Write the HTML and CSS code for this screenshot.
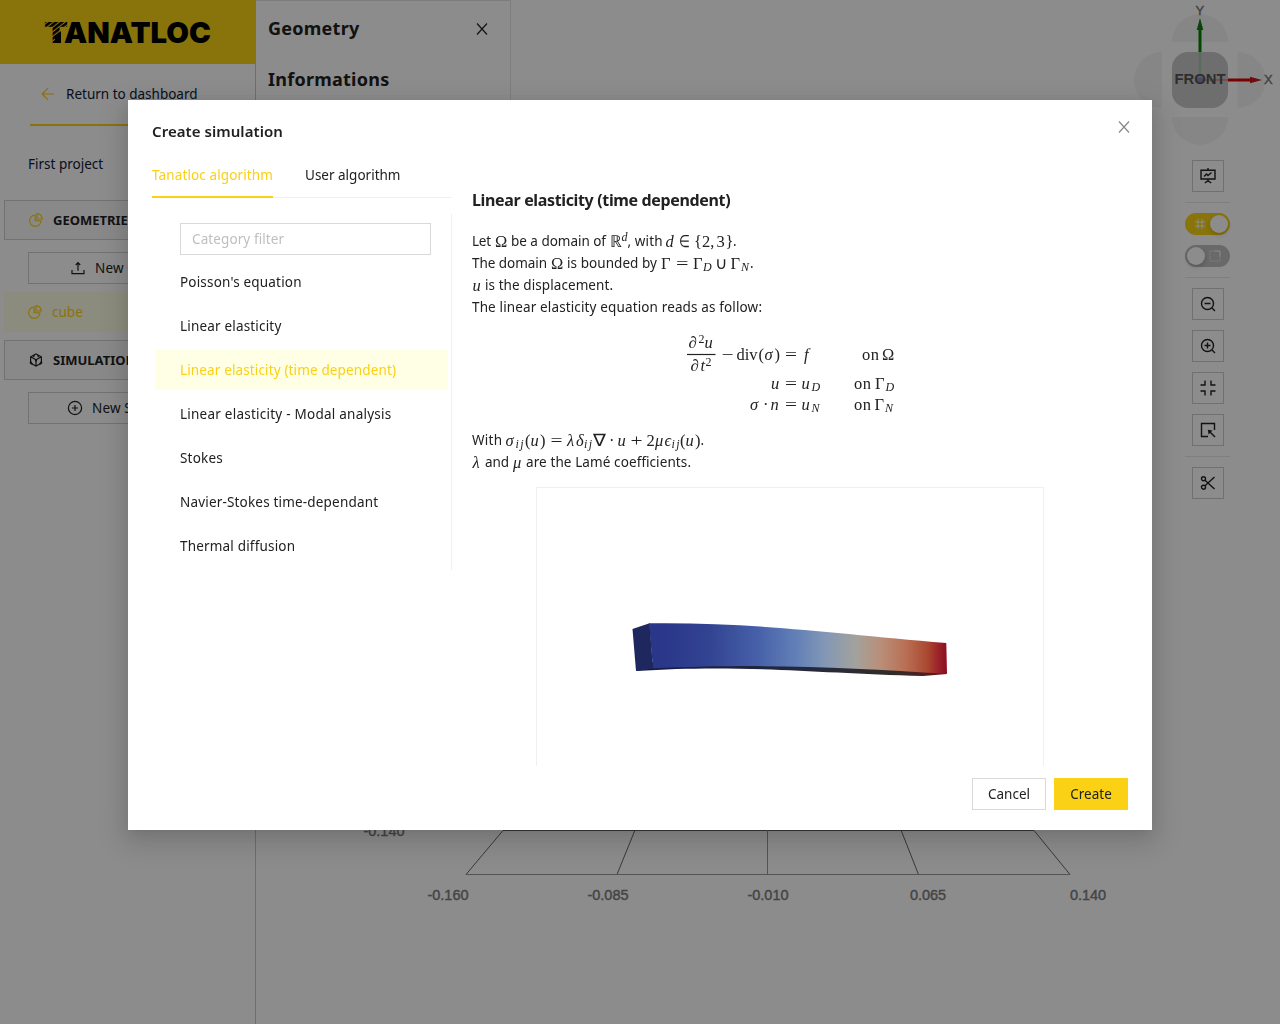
FILE: index.html
```html
<!DOCTYPE html>
<html lang="en">
<head>
<meta charset="utf-8">
<title>Tanatloc</title>
<link rel="stylesheet" href="styles.css">
</head>
<body>
<div class="app">
  <aside class="sidebar">
    <div class="brand">
      <svg width="176" height="44" viewBox="-4 -11 176 44">
        <defs><pattern id="stripes" width="3.6" height="3.6" patternUnits="userSpaceOnUse" patternTransform="rotate(-38)"><rect width="3.6" height="2.5" fill="#000"/></pattern></defs>
        <text class="logo" x="0" y="22" textLength="24" lengthAdjust="spacingAndGlyphs">T</text>
        <path d="M17 10 L17 22 H11 V16Z"/>
        <text class="logo" x="20" y="22" textLength="147" lengthAdjust="spacingAndGlyphs">ANATLOC</text>
      </svg>
    </div>
    <div class="return">
      <svg class="gold" width="14" height="14" viewBox="0 0 14 14"><path d="M13 7H1.5M7 1.2 1.2 7 7 12.8"/></svg>
      <span>Return to dashboard</span>
    </div>
    <div class="project">First project</div>
    <div class="group">
      <svg class="gold" width="14" height="14" viewBox="0 0 14 14"><path d="M6 2A5.7 5.7 0 1 0 12 8L6.3 7.7ZM8 .7V6H13.3A5.4 5.4 0 0 0 8 .7Z"/></svg>
      <b>GEOMETRIES</b>
    </div>
    <div class="add"><svg width="14" height="14" viewBox="0 0 14 14"><path d="M1 9V12.6H13V9M7 9.8V2M4.8 4 7 1.6 9.2 4"/></svg><span>New Geometry</span></div>
    <div class="item"><svg class="gold" width="14" height="14" viewBox="0 0 14 14"><path d="M6 2A5.7 5.7 0 1 0 12 8L6.3 7.7ZM8 .7V6H13.3A5.4 5.4 0 0 0 8 .7Z"/></svg><span>cube</span></div>
    <div class="group">
      <svg width="14" height="14" viewBox="0 0 14 14"><path d="M7 1 12.4 3.8V10.2L7 13 1.6 10.2V3.8ZM1.6 3.8 7 6.8 12.4 3.8M7 6.8V13"/><path stroke-width="2" d="M4 2.6 5.500 3.400M10 2.600 8.500 3.400M1.800 8.500V10L3.500 11M12.200 8.500V10L10.500 11M7 6.500V8.500"/></svg>
      <b>SIMULATIONS</b>
    </div>
    <div class="add sim"><svg width="16" height="16" viewBox="0 0 16 16"><circle cx="8" cy="8" r="6.6"/><path d="M8 5V11M5 8H11"/></svg><span>New Simulation</span></div>
  </aside>

  <section class="panel">
    <div class="panel-head"><h2>Geometry</h2><svg width="14" height="14" viewBox="0 0 14 14"><path d="M2 1.5 12 12.5M12 1.5 2 12.5"/></svg></div>
    <h2 class="info">Informations</h2>
  </section>

  <main class="view">
    <svg class="plot" width="769" height="194" viewBox="340 730 769 194">
      <path class="grid" d="M503 830.5H1034L1070 874.5M466 874.500 503 830.500M635 830 617 874.5M901 830 918.5 874.5"/>
      <path class="grid thin" d="M466 874.500H1070M767.5 830V874.5"/>
      <text x="363.500" y="836" textLength="41">-0.140</text>
      <text x="427.500" y="900" textLength="41">-0.160</text>
      <text x="587.500" y="900" textLength="41">-0.085</text>
      <text x="747.500" y="900" textLength="41">-0.010</text>
      <text x="910" y="900" textLength="36">0.065</text>
      <text x="1070" y="900" textLength="36">0.140</text>
    </svg>
    <svg class="compass" width="150" height="150" viewBox="1130 0 150 150">
      <g fill="#f5f5f5"><path d="M1172 42A28 28 0 0 1 1228 42ZM1172 117A28 28 0 0 0 1228 117ZM1162 52A28 28 0 0 0 1162 108ZM1237.500 52A28 28 0 0 1 1237.500 108Z"/></g>
      <rect x="1172" y="52" width="56" height="56" rx="16" fill="#c8c8c8"/>
      <path d="M1200 52V80" stroke="#a9c2a9" stroke-width="2.500"/><path d="M1200 80H1228" stroke="#c99a9a" stroke-width="2"/>
      <path d="M1200 28V52" stroke="#008000" stroke-width="3"/><path d="M1228 80H1251" stroke="#d90000" stroke-width="3"/>
      <path d="M1200 18 1203.300 30H1196.700Z" fill="#127c12"/><path d="M1262 80 1250 76.700V83.300Z" fill="#c61818"/>
      <circle cx="1200" cy="80" r="3" fill="#8585dd"/>
      <text class="front" x="1174.500" y="84" textLength="51" lengthAdjust="spacingAndGlyphs">FRONT</text>
      <text class="axis" x="1195.500" y="15">Y</text><text class="axis" x="1264" y="84">X</text>
    </svg>
    <div class="tools">
      <button><svg width="16" height="16" viewBox="0 0 16 16"><path d="M8 0V2M1 2.300H15V11H1ZM8 11V13M4.800 15 8 12.700 11.200 15M4 8.500 6.500 6 8 7.500 11.500 4.500"/></svg></button>
      <hr>
      <div class="switch on"><svg width="12" height="12" viewBox="0 0 12 12"><path d="M4 1V11M8 1V11M1 4H11M1 8H11"/></svg><i></i></div>
      <div class="switch"><i></i><svg width="12" height="12" viewBox="0 0 12 12"><path stroke-dasharray="1 1.400" d="M6 1H1V11H11V6"/><path d="M6 1H11V6"/></svg></div>
      <hr>
      <button><svg width="16" height="16" viewBox="0 0 16 16"><circle cx="7.500" cy="7.500" r="6"/><path d="M12 12 15 15M4.500 7.500H10.500"/></svg></button>
      <button><svg width="16" height="16" viewBox="0 0 16 16"><circle cx="7.500" cy="7.500" r="6"/><path d="M12 12 15 15M4.500 7.500H10.500M7.500 4.500V10.500"/></svg></button>
      <button><svg width="16" height="16" viewBox="0 0 16 16"><path d="M.5 5H5V.5M11 .5V5H15.500M.5 11H5V15.500M11 15.500V11H15.500"/></svg></button>
      <button><svg width="16" height="16" viewBox="0 0 16 16"><path d="M8 14.500H1.500V1.500H14.500V8"/><path d="M15 15 9.500 9.500"/><path fill="#222" stroke="none" d="M7.800 7.800 12.500 8.600 8.600 12.500Z"/></svg></button>
      <hr>
      <button><svg width="16" height="16" viewBox="0 0 16 16"><circle cx="3.500" cy="3.800" r="2"/><circle cx="3.500" cy="12.200" r="2"/><path d="M5 5.300 14.500 14M5 10.700 14.500 2"/></svg></button>
    </div>
  </main>
</div>

<div class="mask">
  <div class="modal" role="dialog">
    <header><h3>Create simulation</h3><svg width="14" height="14" viewBox="0 0 14 14"><path d="M2 1.500 12 12.500M12 1.500 2 12.500"/></svg></header>
    <div class="body">
      <div class="left">
        <nav><span class="tab active">Tanatloc algorithm</span><span class="tab user">User algorithm</span></nav>
        <div class="menu">
          <input placeholder="Category filter">
          <a>Poisson's equation</a>
          <a>Linear elasticity</a>
          <a class="selected">Linear elasticity (time dependent)</a>
          <a class="modal-analysis">Linear elasticity - Modal analysis</a>
          <a>Stokes</a>
          <a>Navier-Stokes time-dependant</a>
          <a>Thermal diffusion</a>
        </div>
      </div>
      <article>
        <h4>Linear elasticity (time dependent)</h4>
        <div class="line">
          <svg width="266" height="22" viewBox="472 230 266 22">
            <text class="s" x="472" y="246" textLength="19">Let</text><text x="495" y="246.500">Ω</text>
            <text class="s" x="511" y="246" textLength="95">be a domain of</text><text x="609.500" y="246.500">ℝ</text><text class="i sm" x="621.500" y="241">d</text>
            <text class="s" x="627.500" y="246" textLength="35">, with</text><text class="i" x="665.500" y="246.500">d</text><text x="679" y="246.500" textLength="11" lengthAdjust="spacingAndGlyphs">∈</text><text x="694" y="246.500">{</text><text x="702" y="246.500">2,</text><text x="716.500" y="246.500">3</text><text x="725.500" y="246.500">}</text><text class="s" x="733" y="246">.</text>
          </svg>
        </div>
        <div class="line">
          <svg width="284" height="22" viewBox="472 252 284 22">
            <text class="s" x="472" y="268" textLength="75">The domain</text><text x="551" y="268.500">Ω</text><text class="s" x="567" y="268" textLength="90">is bounded by</text>
            <text x="661" y="268.500">Γ</text><text x="676" y="268.500" textLength="12.500" lengthAdjust="spacingAndGlyphs">=</text><text x="693" y="268.500">Γ</text><text class="i sm" x="703" y="271">D</text><text x="715" y="268.500">∪</text><text x="730.500" y="268.500">Γ</text><text class="i sm" x="741" y="271">N</text><text class="s" x="750" y="268">.</text>
          </svg>
        </div>
        <div class="line"><svg width="145" height="22" viewBox="472 274 145 22"><text class="i" x="472.500" y="290.500">u</text><text class="s" x="485" y="290" textLength="128">is the displacement.</text></svg></div>
        <div class="line"><svg width="295" height="22" viewBox="472 296 295 22"><text class="s" x="472" y="312" textLength="290">The linear elasticity equation reads as follow:</text></svg></div>
        <div class="display">
          <svg width="211" height="84" viewBox="685 332 211 84">
            <text class="i" x="688.500" y="348">∂</text><text class="sm" x="698.500" y="343">2</text><text class="i" x="704.500" y="348">u</text>
            <path d="M687 354.500H715.500"/>
            <text class="i" x="690.500" y="371">∂</text><text class="i" x="700.500" y="371">t</text><text class="sm" x="705.500" y="366">2</text>
            <text x="721.500" y="360" textLength="12" lengthAdjust="spacingAndGlyphs">−</text><text x="736.500" y="360" textLength="21">div</text><text x="758.500" y="360">(</text><text class="i" x="764.500" y="360">σ</text><text x="774.500" y="360">)</text><text x="785" y="360" textLength="12" lengthAdjust="spacingAndGlyphs">=</text><text class="i" x="804" y="360">f</text><text x="862" y="360" textLength="17">on</text><text x="882" y="360">Ω</text>
            <text class="i" x="771" y="388.500">u</text><text x="785" y="388.500" textLength="12" lengthAdjust="spacingAndGlyphs">=</text><text class="i" x="801.500" y="388.500">u</text><text class="i sm" x="811.500" y="391">D</text><text x="854" y="388.500" textLength="17">on</text><text x="875" y="388.500">Γ</text><text class="i sm" x="885.500" y="391">D</text>
            <text class="i" x="750" y="409.500">σ</text><text x="763" y="409.500">·</text><text class="i" x="770.500" y="409.500">n</text><text x="785" y="409.500" textLength="12" lengthAdjust="spacingAndGlyphs">=</text><text class="i" x="801.500" y="409.500">u</text><text class="i sm" x="811.500" y="412">N</text><text x="854" y="409.500" textLength="17">on</text><text x="874.500" y="409.500">Γ</text><text class="i sm" x="885" y="412">N</text>
          </svg>
        </div>
        <div class="line">
          <svg width="234" height="22" viewBox="472 429 234 22">
            <text class="s" x="472" y="445" textLength="30">With</text><text class="i" x="505.500" y="445.500">σ</text><text class="i sm" x="515.500" y="448" textLength="8">ij</text><text x="525" y="445.500">(</text><text class="i" x="530.500" y="445.500">u</text><text x="540" y="445.500">)</text><text x="550.500" y="445.500" textLength="12" lengthAdjust="spacingAndGlyphs">=</text><text class="i" x="567" y="445.500">λ</text><text class="i" x="576" y="445.500">δ</text><text class="i sm" x="584" y="448" textLength="8">ij</text><text x="592.500" y="445.500" textLength="12.500" lengthAdjust="spacingAndGlyphs">∇</text><text x="609" y="445.500">·</text><text class="i" x="617.500" y="445.500">u</text><text x="630.500" y="445.500" textLength="12" lengthAdjust="spacingAndGlyphs">+</text><text x="646.500" y="445.500">2</text><text class="i" x="655" y="445.500">μ</text><text class="i" x="664.500" y="445.500">ϵ</text><text class="i sm" x="671.500" y="448" textLength="8">ij</text><text x="680" y="445.500">(</text><text class="i" x="685.500" y="445.500">u</text><text x="695" y="445.500">)</text><text class="s" x="700.500" y="445">.</text>
          </svg>
        </div>
        <div class="line"><svg width="222" height="22" viewBox="472 451 222 22"><text class="i" x="472.500" y="467.500">λ</text><text class="s" x="485" y="467" textLength="24">and</text><text class="i" x="513" y="467.500">μ</text><text class="s" x="526" y="467" textLength="165">are the Lamé coefficients.</text></svg></div>
        <div class="figure">
          <svg width="506" height="300" viewBox="537 488 506 300">
            <defs><linearGradient id="heat" x1="633" x2="947" y1="640" y2="643" gradientUnits="userSpaceOnUse"><stop offset="0" stop-color="#2b3686"/><stop offset=".1" stop-color="#2a378a"/><stop offset=".25" stop-color="#334493"/><stop offset=".4" stop-color="#4761a9"/><stop offset=".52" stop-color="#6280b7"/><stop offset=".61" stop-color="#8297b6"/><stop offset=".71" stop-color="#a3a29c"/><stop offset=".79" stop-color="#b98e78"/><stop offset=".87" stop-color="#b86f55"/><stop offset=".94" stop-color="#a9472f"/><stop offset=".97" stop-color="#9d252a"/><stop offset="1" stop-color="#8c0d20"/></linearGradient>
            <linearGradient id="under"><stop offset="0" stop-color="#141b44"/><stop offset=".6" stop-color="#252b3b"/><stop offset=".85" stop-color="#352b27"/><stop offset="1" stop-color="#6b101a"/></linearGradient></defs>
            <path fill="url(#under)" d="M636 671C740 664 810 673 923 676L947 674 940 668 650 662Z"/>
            <path fill="url(#heat)" d="M649 623.300C750 622 830 633 946.300 643L947 673.700C850 668 770 663 653 668.500Z"/>
            <path fill="#1e285e" d="M632.500 629 649.500 623.300 653 668.500 636 671Z"/>
          </svg>
        </div>
      </article>
    </div>
    <footer><button>Cancel</button><button class="primary">Create</button></footer>
  </div>
</div>
</body>
</html>
```

FILE: styles.css
```css
* { box-sizing: border-box; }
body { margin: 0; font: 13.5px/22px "Noto Sans", sans-serif; color: #212121; overflow: hidden; }
h2, h3, h4 { margin: 0; }
svg { display: block; flex: none; fill: none; stroke: #222; stroke-width: 1.2; }
svg text { stroke: none; fill: #222; }
.gold { stroke: #fad114; }

.app { display: flex; height: 1024px; background: #fff; }
.sidebar { width: 256px; border-right: 1px solid #c8c8c8; background: #fff; }
.brand { width: 256px; height: 64px; background: #fad114; padding: 10px 0 0 40px; }
.brand svg { stroke: none; fill: #000; }
.brand .logo { font: 900 29px Inter, sans-serif; fill: #000; }
.brand .logo:first-of-type { fill: url(#stripes); }
.return { display: flex; align-items: center; gap: 11px; height: 62px; margin-left: 30px; padding-left: 11px; border-bottom: 2px solid #fad114; color: #0d1a36; }
.project { height: 74px; padding: 27px 28px 0; color: #0d1a36; }
.group { display: flex; align-items: center; gap: 10px; height: 40px; margin-left: 4px; padding-left: 24px; border: 1px solid #d0d0d0; background: #fafafa; font-size: 13px; }
.add { display: flex; align-items: center; gap: 10px; width: 200px; height: 32px; margin: 12px 0 8px 28px; padding-left: 42px; border: 1px solid #d0d0d0; letter-spacing: .15px; overflow: hidden; white-space: nowrap; }
.add.sim { padding-left: 38px; gap: 9px; }
.item { display: flex; align-items: center; gap: 10px; height: 40px; margin: 0 0 8px 4px; padding-left: 24px; background: #ffffe6; color: #fad114; }
.panel { width: 255px; height: 600px; border: 1px solid #e4e4e4; border-left: 0; padding: 16px 21px 0 12px; }
.panel-head { display: flex; justify-content: space-between; align-items: center; }
.panel-head svg { margin-top: 2px; }
.panel h2 { font-size: 18px; line-height: 22px; letter-spacing: .25px; }
.panel .info { margin-top: 29px; }
.view { flex: 1; position: relative; }
.plot { position: absolute; left: -171px; top: 730px; stroke-width: 1; }
.plot .grid { stroke: #666; }
.plot .thin { stroke: #999; }
.plot text { font: 14.500px "Liberation Sans", sans-serif; fill: #7c7c7c; stroke: #7c7c7c; stroke-width: .4px; }
.compass { position: absolute; right: 0; top: 0; stroke: none; }
.compass .front { font: bold 14px "Liberation Sans", sans-serif; fill: #555; }
.compass .axis { font: 13px "Liberation Sans", sans-serif; fill: #777; stroke: #777; stroke-width: .4px; }
.tools { position: absolute; right: 50px; top: 160px; width: 45px; display: flex; flex-direction: column; align-items: center; gap: 10px; }
.tools button { width: 32px; height: 32px; padding: 7px; border: 1px solid #ccc; background: #fff; }
.tools svg { stroke-width: 1.400; }
.tools hr { width: 45px; height: 1px; margin: 0; border: 0; background: #e8e8e8; }
.switch { width: 45px; height: 22px; display: flex; align-items: center; justify-content: space-between; padding: 0 2px; border-radius: 11px; background: #bfbfbf; }
.switch svg { stroke: #fff; stroke-width: 1; margin: 0 7px 0 0; }
.switch.on { background: #fad114; }
.switch.on svg { margin: 0 0 0 7px; }
.switch i { flex: none; width: 18px; height: 18px; border-radius: 50%; background: #fff; box-shadow: 0 2px 4px rgba(0,35,11,.2); }

.mask { position: fixed; inset: 0; padding: 100px 128px; background: rgba(0,0,0,.45); }
.modal { width: 1024px; height: 730px; padding: 0 24px; background: #fff; display: flex; flex-direction: column; box-shadow: 0 3px 6px -4px rgba(0,0,0,.12), 0 6px 16px rgba(0,0,0,.08), 0 9px 28px 8px rgba(0,0,0,.12); }
.modal header { display: flex; justify-content: space-between; height: 54px; padding-top: 20px; }
.modal header h3 { font-size: 15px; font-weight: 600; line-height: 22px; letter-spacing: .06px; }
.modal header svg { margin: 0 -3px 0 0; stroke: #888; }
.body { display: flex; gap: 20px; height: 612px; overflow: hidden; }
.left { width: 300px; }
nav { display: flex; gap: 32px; height: 44px; border-bottom: 1px solid #f0f0f0; }
.tab { height: 44px; padding-top: 10px; white-space: nowrap; letter-spacing: .12px; }
.user { letter-spacing: 0; }
.active { color: #fad114; border-bottom: 2px solid #fad114; }
.menu { height: 356px; margin-top: 16px; padding: 9px 3px 0; border-right: 1px solid #f0f0f0; display: flex; flex-direction: column; gap: 4px; }
.menu input { width: 251px; height: 32px; margin: 0 0 3px 25px; padding: 0 11px; border: 1px solid #d9d9d9; font: inherit; letter-spacing: .1px; flex: none; }
.menu input::placeholder { color: #bfbfbf; opacity: 1; }
.menu a { height: 40px; line-height: 40px; padding-left: 25px; flex: none; white-space: nowrap; letter-spacing: .18px; }
.menu .selected { background: #ffffe6; color: #fad114; letter-spacing: .14px; }
.menu .modal-analysis { letter-spacing: .24px; }
article { width: 636px; padding-top: 35px; }
h4 { font-size: 16px; line-height: 22px; letter-spacing: -.35px; margin-bottom: 19px; }
.line { height: 22px; }
.display { display: flex; justify-content: center; height: 111px; padding-top: 14px; }
article text { font: 16.500px "Liberation Serif", serif; }
article .i { font-style: italic; }
article .sm { font-size: 12px; }
article .s { font: 13.5px "Noto Sans", sans-serif; }
.figure { width: 508px; height: 320px; margin: 14px auto 0; border: 1px solid #f0f0f0; }
.figure svg { stroke: none; }
footer { display: flex; justify-content: flex-end; gap: 8px; padding-top: 12px; }
footer button { width: 74px; height: 32px; padding: 0; border: 1px solid #d9d9d9; background: #fff; font: inherit; color: #212121; }
footer .primary { border-color: #fad114; background: #fad114; }
```
